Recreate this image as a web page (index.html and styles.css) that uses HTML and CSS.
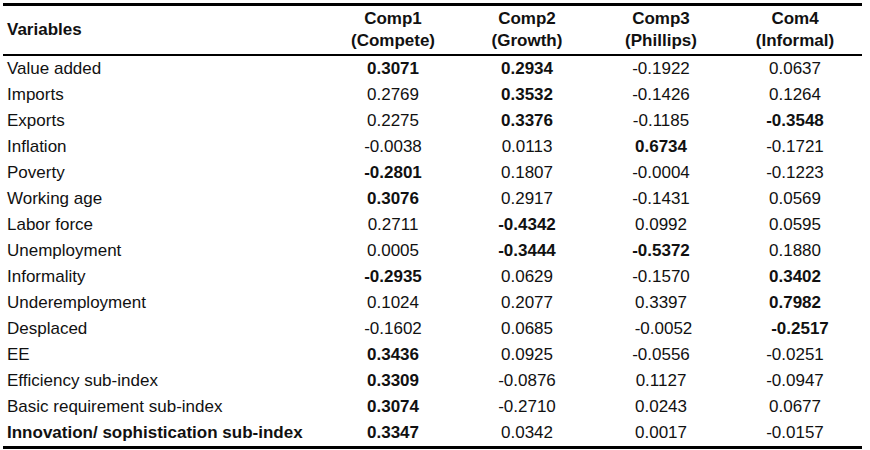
FILE: index.html
```html
<!DOCTYPE html>
<html>
<head>
<meta charset="utf-8">
<link rel="stylesheet" href="styles.css">
</head>
<body>
<table class="pca">
  <colgroup>
    <col class="c-var"><col class="c-num"><col class="c-num"><col class="c-num"><col class="c-num">
  </colgroup>
  <thead>
    <tr>
      <th class="h-var">Variables</th>
      <th class="h-comp">Comp1<br>(Compete)</th>
      <th class="h-comp">Comp2<br>(Growth)</th>
      <th class="h-comp">Comp3<br>(Phillips)</th>
      <th class="h-comp">Com4<br>(Informal)</th>
    </tr>
  </thead>
  <tbody>
    <tr><td>Value added</td><td class="b">0.3071</td><td class="b">0.2934</td><td>-0.1922</td><td>0.0637</td></tr>
    <tr><td>Imports</td><td>0.2769</td><td class="b">0.3532</td><td>-0.1426</td><td>0.1264</td></tr>
    <tr><td>Exports</td><td>0.2275</td><td class="b">0.3376</td><td>-0.1185</td><td class="b">-0.3548</td></tr>
    <tr><td>Inflation</td><td>-0.0038</td><td>0.0113</td><td class="b">0.6734</td><td>-0.1721</td></tr>
    <tr><td>Poverty</td><td class="b">-0.2801</td><td>0.1807</td><td>-0.0004</td><td>-0.1223</td></tr>
    <tr><td>Working age</td><td class="b">0.3076</td><td>0.2917</td><td>-0.1431</td><td>0.0569</td></tr>
    <tr><td>Labor force</td><td>0.2711</td><td class="b">-0.4342</td><td>0.0992</td><td>0.0595</td></tr>
    <tr><td>Unemployment</td><td>0.0005</td><td class="b">-0.3444</td><td class="b">-0.5372</td><td>0.1880</td></tr>
    <tr><td>Informality</td><td class="b">-0.2935</td><td>0.0629</td><td>-0.1570</td><td class="b">0.3402</td></tr>
    <tr><td>Underemployment</td><td>0.1024</td><td>0.2077</td><td>0.3397</td><td class="b">0.7982</td></tr>
    <tr><td>Desplaced</td><td>-0.1602</td><td>0.0685</td><td class="nudge-s">-0.0052</td><td class="b nudge">-0.2517</td></tr>
    <tr><td>EE</td><td class="b">0.3436</td><td>0.0925</td><td>-0.0556</td><td>-0.0251</td></tr>
    <tr><td>Efficiency sub-index</td><td class="b">0.3309</td><td>-0.0876</td><td>0.1127</td><td>-0.0947</td></tr>
    <tr><td>Basic requirement sub-index</td><td class="b">0.3074</td><td>-0.2710</td><td>0.0243</td><td>0.0677</td></tr>
    <tr><td class="b">Innovation/ sophistication sub-index</td><td class="b">0.3347</td><td>0.0342</td><td>0.0017</td><td>-0.0157</td></tr>
  </tbody>
</table>
</body>
</html>
```

FILE: styles.css
```css
html, body {
  margin: 0;
  padding: 0;
  background: #ffffff;
}

body {
  padding: 3px 0 0 3px;
  font-family: "Liberation Sans", Arial, sans-serif;
  font-size: 17px;
  color: #111111;
}

.pca {
  border-collapse: collapse;
  table-layout: fixed;
  width: 859px;
}

.c-var { width: 323px; }
.c-num { width: 134px; }

.pca thead tr {
  border-top: 3px solid #000;
  border-bottom: 2px solid #000;
}

.pca th {
  font-weight: bold;
  padding: 0;
  line-height: 22px;
}

.pca th.h-var {
  text-align: left;
  vertical-align: middle;
  padding-left: 4px;
}

.pca th.h-comp {
  text-align: center;
  vertical-align: top;
  padding-top: 2px;
  height: 46px;
}

.pca tbody tr:last-child {
  border-bottom: 3px solid #000;
}

.pca td {
  height: 26px;
  line-height: 26px;
  padding: 0;
  text-align: center;
  white-space: nowrap;
}

.pca td:first-child {
  text-align: left;
  padding-left: 4px;
}

.b { font-weight: bold; }

.pca td.nudge { padding-left: 10px; }
.pca td.nudge-s { padding-left: 5px; }
```
